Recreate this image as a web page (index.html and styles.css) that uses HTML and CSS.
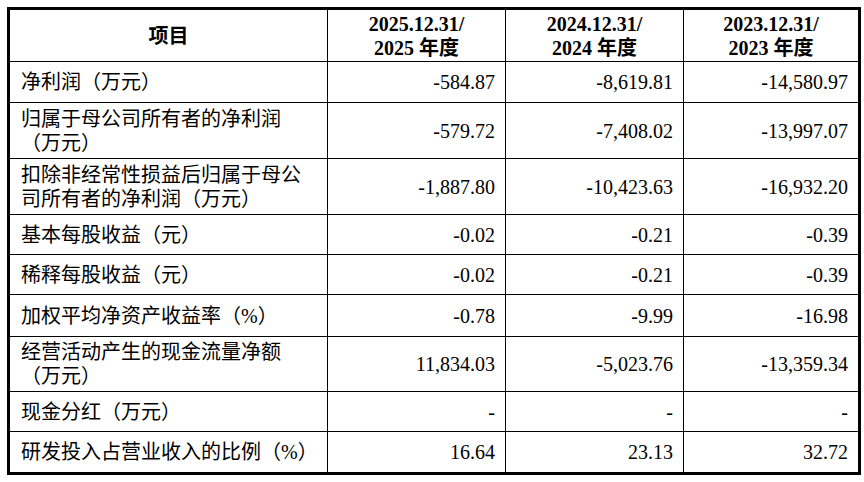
FILE: index.html
```html
<!DOCTYPE html>
<html lang="zh-CN">
<head>
<meta charset="utf-8">
<link rel="stylesheet" href="styles.css">
</head>
<body>
<table class="fin">
  <colgroup>
    <col class="c-item">
    <col class="c-num">
    <col class="c-num">
    <col class="c-last">
  </colgroup>
  <thead>
    <tr class="h52">
      <th class="head-item">项目</th>
      <th>2025.12.31/<br>2025 年度</th>
      <th>2024.12.31/<br>2024 年度</th>
      <th class="last">2023.12.31/<br>2023 年度</th>
    </tr>
  </thead>
  <tbody>
    <tr class="h41">
      <td class="label">净利润（万元）</td>
      <td class="num">-584.87</td>
      <td class="num">-8,619.81</td>
      <td class="num last">-14,580.97</td>
    </tr>
    <tr class="h56">
      <td class="label">归属于母公司所有者的净利润（万元）</td>
      <td class="num">-579.72</td>
      <td class="num">-7,408.02</td>
      <td class="num last">-13,997.07</td>
    </tr>
    <tr class="h56">
      <td class="label">扣除非经常性损益后归属于母公司所有者的净利润（万元）</td>
      <td class="num">-1,887.80</td>
      <td class="num">-10,423.63</td>
      <td class="num last">-16,932.20</td>
    </tr>
    <tr class="h40">
      <td class="label">基本每股收益（元）</td>
      <td class="num">-0.02</td>
      <td class="num">-0.21</td>
      <td class="num last">-0.39</td>
    </tr>
    <tr class="h40">
      <td class="label">稀释每股收益（元）</td>
      <td class="num">-0.02</td>
      <td class="num">-0.21</td>
      <td class="num last">-0.39</td>
    </tr>
    <tr class="h42">
      <td class="label">加权平均净资产收益率（%）</td>
      <td class="num">-0.78</td>
      <td class="num">-9.99</td>
      <td class="num last">-16.98</td>
    </tr>
    <tr class="h55">
      <td class="label">经营活动产生的现金流量净额（万元）</td>
      <td class="num">11,834.03</td>
      <td class="num">-5,023.76</td>
      <td class="num last">-13,359.34</td>
    </tr>
    <tr class="h40">
      <td class="label">现金分红（万元）</td>
      <td class="num">-</td>
      <td class="num">-</td>
      <td class="num last">-</td>
    </tr>
    <tr class="h40 final">
      <td class="label nowrap">研发投入占营业收入的比例（%）</td>
      <td class="num">16.64</td>
      <td class="num">23.13</td>
      <td class="num last">32.72</td>
    </tr>
  </tbody>
</table>
</body>
</html>
```

FILE: styles.css
```css
html, body {
  margin: 0;
  padding: 0;
  background: #ffffff;
}

body {
  padding: 7px;
  font-family: "Liberation Serif", "Noto Sans CJK SC", serif;
  color: #000000;
}

.fin {
  box-sizing: border-box;
  width: 854px;
  border: 3px solid #000000;
  border-collapse: separate;
  border-spacing: 0;
  table-layout: fixed;
}

.c-item { width: 318px; }
.c-num { width: 178px; }
.c-last { width: 174px; }

.fin th,
.fin td {
  box-sizing: border-box;
  padding: 0 10px 0 11px;
  border-right: 1px solid #000000;
  border-bottom: 1px solid #000000;
  font-size: 20px;
  line-height: 24px;
  vertical-align: middle;
}

.fin th.last,
.fin td.last {
  border-right: none;
}

.fin tr.final td {
  border-bottom: none;
}

.fin th {
  font-weight: bold;
  text-align: center;
  padding: 0 4px;
}

.fin th.head-item {
  font-size: 20px;
}

.label {
  text-align: left;
}

.nowrap {
  white-space: nowrap;
}

.num {
  text-align: right;
}

.h40 td { height: 40px; }
.h41 td { height: 41px; }
.h42 td { height: 42px; }
.h52 th { height: 52px; }
.h55 td { height: 55px; }
.h56 td { height: 56px; }
.final td { height: 40px; }
```
